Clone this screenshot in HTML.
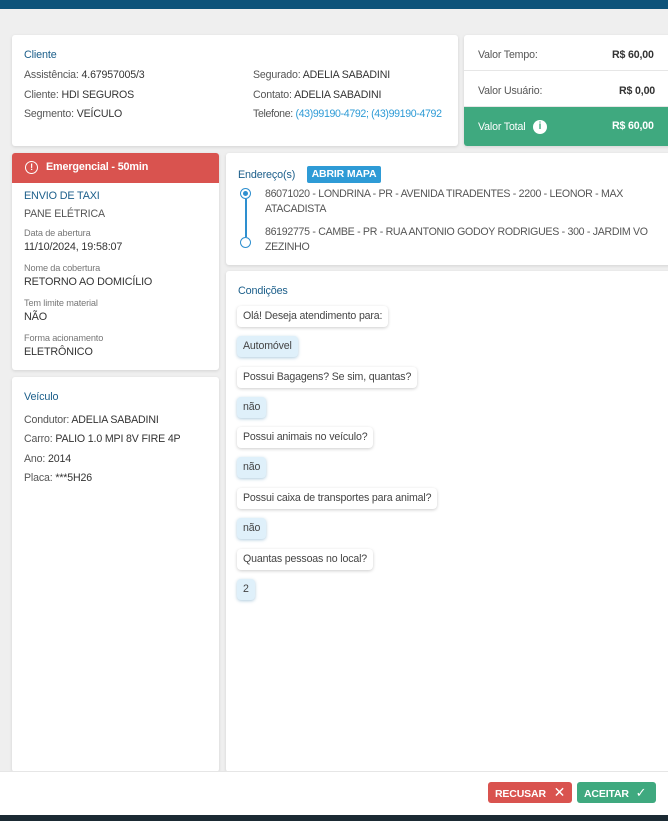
<!DOCTYPE html>
<html><head><meta charset="utf-8"><style>
*{box-sizing:border-box;margin:0;padding:0}
body{width:668px;height:821px;background:#efefef;font-family:"Liberation Sans",sans-serif;font-size:10.6px;color:#555;position:relative;overflow:hidden;letter-spacing:-0.15px}
.top{position:absolute;left:0;top:0;width:668px;height:9px;background:#0d537a}
.card{position:absolute;background:#fff;border-radius:3px;box-shadow:0 1px 3px rgba(0,0,0,.12)}
.t{color:#1b5e8a;font-size:10.8px;position:absolute}
.l{position:absolute;white-space:nowrap}
.d{color:#333}
.a{color:#2e9bd6}
.sm{font-size:9.2px;color:#777}
.b{color:#333;font-size:10.8px}
.bub{position:absolute;left:237px;height:21px;line-height:21px;padding:0 6px;background:#fff;border-radius:4px;box-shadow:0 1px 3px rgba(0,0,0,.2);color:#444;white-space:nowrap}
.ans{background:#dff0fa;box-shadow:0 1px 3px rgba(30,110,160,.35)}
.btn{position:absolute;top:782px;height:21px;line-height:21px;color:#fff;font-weight:bold;font-size:10.5px;border-radius:3px;padding-left:7px}
</style></head><body>
<div class="top"></div>
<div class="card" style="left:12px;top:35px;width:446px;height:111px"></div>
<div class="t" style="left:24px;top:49px">Cliente</div>
<div class="l" style="left:24px;top:69px">Assistência: <span class="d">4.67957005/3</span></div>
<div class="l" style="left:24px;top:89px">Cliente: <span class="d">HDI SEGUROS</span></div>
<div class="l" style="left:24px;top:108px">Segmento: <span class="d">VEÍCULO</span></div>
<div class="l" style="left:253px;top:69px">Segurado: <span class="d">ADELIA SABADINI</span></div>
<div class="l" style="left:253px;top:89px">Contato: <span class="d">ADELIA SABADINI</span></div>
<div class="l" style="left:253px;top:108px;letter-spacing:-0.35px">Telefone: <span class="a">(43)99190-4792; (43)99190-4792</span></div>

<div class="card" style="left:464px;top:35px;width:210px;height:111px;overflow:hidden">
<div style="height:36px;border-bottom:1px solid #e6e6e6"></div>
<div style="height:36px;border-bottom:1px solid #e6e6e6"></div>
<div style="height:40px;background:#3fa97f"></div></div>
<div class="l" style="left:478px;top:49px">Valor Tempo:</div>
<div class="l d" style="left:612px;top:49px;font-weight:bold">R$ 60,00</div>
<div class="l" style="left:478px;top:85px">Valor Usuário:</div>
<div class="l d" style="left:619px;top:85px;font-weight:bold">R$ 0,00</div>
<div class="l" style="left:478px;top:121px;color:#fff">Valor Total</div>
<div style="position:absolute;left:533px;top:120px;width:14px;height:14px;border-radius:50%;background:#fff;color:#3fa97f;font-weight:bold;font-size:10px;text-align:center;line-height:14px">i</div>
<div class="l" style="left:612px;top:120px;color:#fff;font-weight:bold">R$ 60,00</div>

<div class="card" style="left:12px;top:153px;width:207px;height:217px;overflow:hidden"><div style="height:30px;background:#d9534f"></div></div>
<div style="position:absolute;left:25px;top:161px;width:13px;height:13px;border:1.3px solid #fff;border-radius:50%;color:#fff;font-size:9px;text-align:center;line-height:11px;font-weight:bold">!</div>
<div class="l" style="left:46px;top:161px;color:#fff;font-weight:bold;font-size:10.8px">Emergencial - 50min</div>
<div class="t" style="left:24px;top:190px">ENVIO DE TAXI</div>
<div class="l" style="left:24px;top:208px">PANE ELÉTRICA</div>
<div class="l sm" style="left:24px;top:228px">Data de abertura</div>
<div class="l b" style="left:24px;top:241px">11/10/2024, 19:58:07</div>
<div class="l sm" style="left:24px;top:263px">Nome da cobertura</div>
<div class="l b" style="left:24px;top:276px">RETORNO AO DOMICÍLIO</div>
<div class="l sm" style="left:24px;top:298px">Tem limite material</div>
<div class="l b" style="left:24px;top:311px">NÃO</div>
<div class="l sm" style="left:24px;top:333px">Forma acionamento</div>
<div class="l b" style="left:24px;top:346px">ELETRÔNICO</div>

<div class="card" style="left:12px;top:377px;width:207px;height:395px"></div>
<div class="t" style="left:24px;top:391px">Veículo</div>
<div class="l" style="left:24px;top:414px">Condutor: <span class="d">ADELIA SABADINI</span></div>
<div class="l" style="left:24px;top:433px">Carro: <span class="d">PALIO 1.0 MPI 8V FIRE 4P</span></div>
<div class="l" style="left:24px;top:453px">Ano: <span class="d">2014</span></div>
<div class="l" style="left:24px;top:472px">Placa: <span class="d">***5H26</span></div>

<div class="card" style="left:226px;top:153px;width:450px;height:112px"></div>
<div class="t" style="left:238px;top:169px">Endereço(s)</div>
<div style="position:absolute;left:307px;top:166px;width:74px;height:17px;background:#2e9bd6;color:#fff;font-weight:bold;font-size:10.5px;text-align:center;line-height:17px;border-radius:2px">ABRIR MAPA</div>
<div style="position:absolute;left:240px;top:188px;width:11px;height:11px;border:1.5px solid #2e8fcf;border-radius:50%"><div style="margin:1.5px;width:5px;height:5px;background:#2e8fcf;border-radius:50%"></div></div>
<div style="position:absolute;left:245px;top:199px;width:1.5px;height:38px;background:#2e8fcf"></div>
<div style="position:absolute;left:240px;top:237px;width:11px;height:11px;border:1.5px solid #2e8fcf;border-radius:50%"></div>
<div class="l" style="left:265px;top:187px;line-height:15px;letter-spacing:-0.3px">86071020 - LONDRINA - PR - AVENIDA TIRADENTES - 2200 - LEONOR - MAX<br>ATACADISTA</div>
<div class="l" style="left:265px;top:225px;line-height:15px;letter-spacing:-0.3px">86192775 - CAMBE - PR - RUA ANTONIO GODOY RODRIGUES - 300 - JARDIM VO<br>ZEZINHO</div>

<div class="card" style="left:226px;top:271px;width:450px;height:501px"></div>
<div class="t" style="left:238px;top:285px">Condições</div>
<div class="bub" style="top:306px">Olá! Deseja atendimento para:</div>
<div class="bub ans" style="top:336px">Automóvel</div>
<div class="bub" style="top:367px">Possui Bagagens? Se sim, quantas?</div>
<div class="bub ans" style="top:397px">não</div>
<div class="bub" style="top:427px">Possui animais no veículo?</div>
<div class="bub ans" style="top:457px">não</div>
<div class="bub" style="top:488px">Possui caixa de transportes para animal?</div>
<div class="bub ans" style="top:518px">não</div>
<div class="bub" style="top:549px">Quantas pessoas no local?</div>
<div class="bub ans" style="top:579px">2</div>

<div style="position:absolute;left:0;top:771px;width:668px;height:44px;background:#fff;border-top:1px solid #e6e6e6"></div>
<div class="btn" style="left:488px;width:84px;background:#d9534f">RECUSAR <span style="font-weight:normal;font-size:14px;margin-left:5px">✕</span></div>
<div class="btn" style="left:577px;width:79px;background:#3fa97f">ACEITAR <span style="font-weight:normal;font-size:13px;margin-left:4px">✓</span></div>
<div style="position:absolute;left:0;top:815px;width:668px;height:6px;background:#1b2a33"></div>
</body></html>
